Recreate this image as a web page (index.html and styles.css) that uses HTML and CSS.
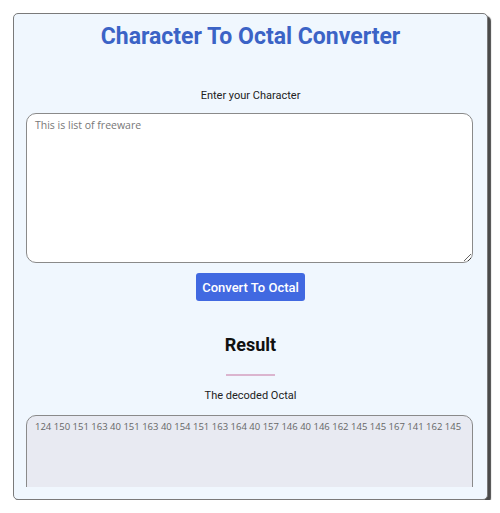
FILE: index.html
```html
<!DOCTYPE html>
<html lang="en">
<head>
<meta charset="utf-8">
<title>Character To Octal Converter</title>
<link rel="stylesheet" href="styles.css">
</head>
<body>
<div class="card">
  <div class="inner">
    <h1 class="title">Character To Octal Converter</h1>
    <label class="label" for="src">Enter your Character</label>
    <textarea id="src" class="input" placeholder="This is list of freeware"></textarea>
    <div class="actions"><button class="btn" type="button">Convert To Octal</button></div>
    <h2 class="result">Result</h2>
    <div class="divider"></div>
    <label class="label label-out" for="out">The decoded Octal</label>
    <textarea id="out" class="output" readonly>124 150 151 163 40 151 163 40 154 151 163 164 40 157 146 40 146 162 145 145 167 141 162 145</textarea>
  </div>
</div>
</body>
</html>
```
FILE: styles.css
```css
html, body {
  margin: 0;
  padding: 0;
  background: #ffffff;
}
body {
  padding: 13px 0 0 13px;
  font-family: Roboto, "Liberation Sans", sans-serif;
}
.card {
  box-sizing: border-box;
  width: 475px;
  height: 487px;
  border: 1px solid #7a7a7a;
  border-radius: 5px;
  box-shadow: 3px 3px 1px #4a4a4a;
  background: #f0f7fe;
  padding: 0 12px 12px;
}
.inner {
  height: 100%;
  overflow: hidden;
  display: flex;
  flex-direction: column;
  align-items: stretch;
}
.inner > * {
  flex: none;
}
.title {
  margin: 8px 0 0;
  font-size: 23px;
  line-height: 30px;
  font-weight: 700;
  color: #3b63c6;
  text-align: center;
}
.label {
  display: block;
  text-align: center;
  font-size: 11px;
  line-height: 14px;
  color: #222;
  margin-top: 37px;
}
.input, .output {
  box-sizing: border-box;
  width: 447px;
  border: 1px solid #8a8a8a;
  border-radius: 10px;
  padding: 4px 8px;
  font-family: "Open Sans", "Liberation Sans", sans-serif;
  font-size: 9.5px;
  color: #666;
  outline: none;
}
.input {
  height: 150px;
  margin: 10px 0 0;
  background: #ffffff;
  resize: vertical;
  font-size: 10.5px;
  padding: 4px 8px;
}
.input::placeholder {
  color: #777;
}
.actions {
  display: flex;
  justify-content: center;
  margin-top: 10px;
}
.btn {
  width: 109px;
  height: 28px;
  border: 0;
  border-radius: 3px;
  background: #4169e1;
  color: #ffffff;
  font-family: Roboto, "Liberation Sans", sans-serif;
  font-weight: 500;
  font-size: 13px;
  padding: 0;
}
.result {
  margin: 31px 0 0;
  font-size: 18px;
  line-height: 26px;
  font-weight: 700;
  color: #111;
  text-align: center;
}
.divider {
  align-self: center;
  width: 49px;
  height: 2px;
  background: #dbb5cf;
  margin-top: 16px;
}
.label-out {
  margin-top: 13px;
}
.output {
  height: 120px;
  margin: 12px 0 0;
  background: #e8eaf2;
  resize: none;
}
```
